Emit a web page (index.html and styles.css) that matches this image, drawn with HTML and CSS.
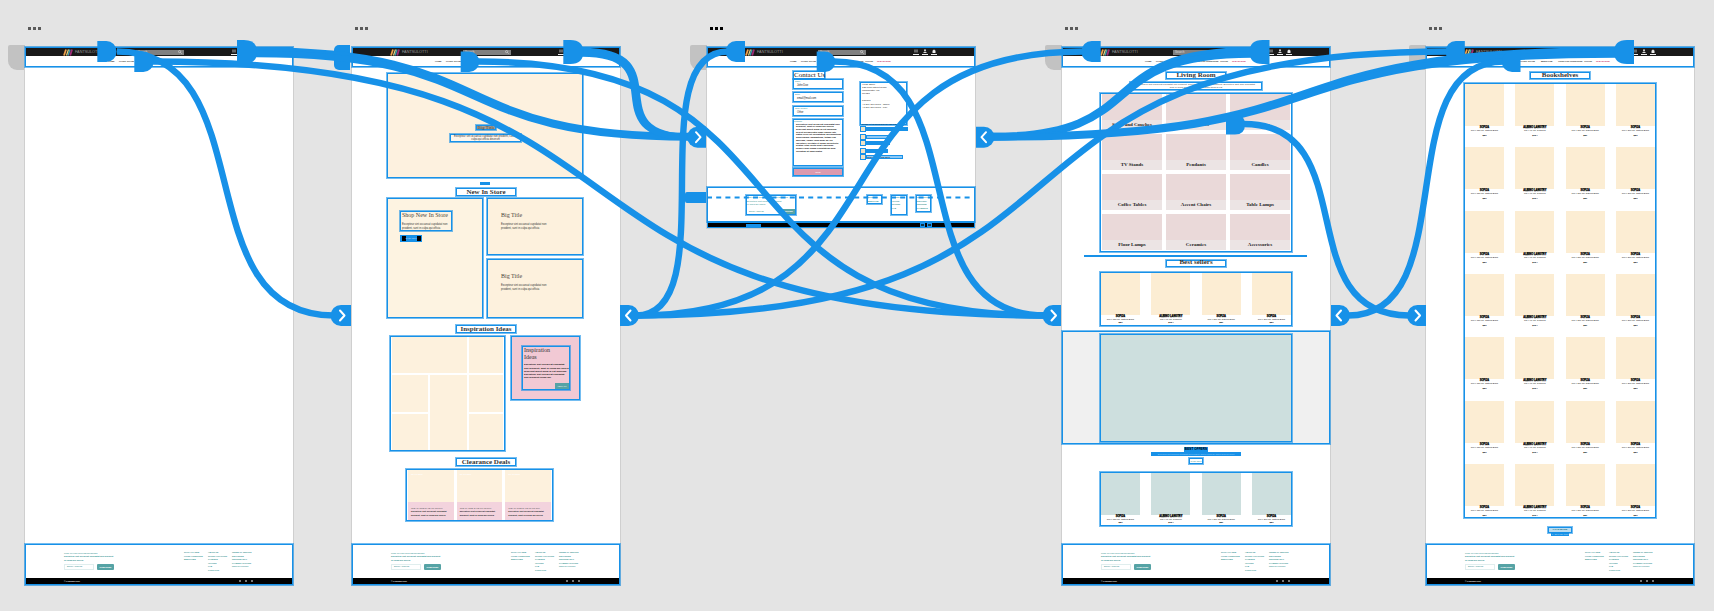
FILE: index.html
```html
<!DOCTYPE html>
<html lang="en">
<head>
<meta charset="utf-8">
<title>Prototype canvas</title>
<link rel="stylesheet" href="styles.css">
</head>
<body>
<main class="canvas">

  <section class="frame f1">
    <div class="dots"><i></i><i></i><i></i></div><div class="home-tab"></div>
    <div class="board"><header class="site-head"></header><footer class="site-foot"></footer></div>
  </section>

  <section class="frame f2">
    <div class="dots"><i></i><i></i><i></i></div><div class="home-tab linked"></div>
    <div class="board">
      <header class="site-head"></header>
      <div class="hero sel">
        <div class="hero-title sel">Big Title</div>
        <p class="hero-text sel">Excepteur sint occaecat cupidatat non proident, sunt in<br>culpa qui officia deserunt</p>
      </div>
      <div class="pill"></div>
      <h2 class="heading sel h-new">New In Store</h2>
      <div class="store">
        <div class="store-main sel">
          <div class="store-copy sel"><h3>Shop New In Store</h3><p>Excepteur sint occaecat cupidatat non<br>proident, sunt in culpa qui officia</p></div>
          <span class="store-btn">SHOP NOW</span>
        </div>
        <div class="store-side">
          <div class="tile sel"><h3>Big Title</h3><p>Excepteur sint occaecat cupidatat non<br>proident, sunt in culpa qui officia</p></div>
          <div class="tile sel"><h3>Big Title</h3><p>Excepteur sint occaecat cupidatat non<br>proident, sunt in culpa qui officia</p></div>
        </div>
      </div>
      <h2 class="heading sel h-insp">Inspiration Ideas</h2>
      <div class="insp">
        <div class="mosaic sel"><i class="wide"></i><i></i><i></i><i class="tall"></i><i></i><i></i><i></i></div>
        <div class="promo sel"><div class="promo-in sel"><h3>Inspiration<br>Ideas</h3><p>Excepteur sint occaecat cupidatat non proident, sunt in culpa qui officia deserunt mollit anim id est laborum. Excepteur sint occaecat cupidatat non proident culpa qui</p><span class="promo-btn">VIEW ALL</span></div></div>
      </div>
      <h2 class="heading sel h-deals">Clearance Deals</h2>
      <div class="deals sel">
        <article><b>UP TO 50%</b><div><h4>CLEARANCE SALE UP TO 50%</h4><p>Excepteur sint occaecat cupidatat<br>proident, sunt in culpa qui officia</p></div></article>
        <article><b>UP TO 50%</b><div><h4>CLEARANCE SALE UP TO 50%</h4><p>Excepteur sint occaecat cupidatat<br>proident, sunt in culpa qui officia</p></div></article>
        <article><b>UP TO 50%</b><div><h4>CLEARANCE SALE UP TO 50%</h4><p>Excepteur sint occaecat cupidatat<br>proident, sunt in culpa qui officia</p></div></article>
      </div>
      <footer class="site-foot"></footer>
    </div>
  </section>

  <section class="frame f3 active">
    <div class="dots"><i></i><i></i><i></i></div><div class="home-tab"></div>
    <div class="board">
      <header class="site-head"></header>
      <div class="contact">
        <form class="form">
          <h2 class="sel">Contact Us</h2>
          <div class="field sel"><label>Name</label><span>John Doe</span></div>
          <div class="field sel f-gap"><label>Email</label><span>email@mail.com</span></div>
          <div class="field sel f-gap"><label>Order number</label><span>Other</span></div>
          <div class="area sel"><label>Message</label><p>Excepteur sint occaecat cupidatat non proident, sunt in culpa qui officia deserunt mollit anim id est laborum. Sed ut perspiciatis unde omnis iste natus error sit voluptatem accusantium doloremque laudantium, totam rem aperiam, eaque ipsa quae ab illo inventore veritatis et quasi architecto beatae vitae dicta sunt explicabo. Nemo enim ipsam voluptatem quia voluptas sit aspernatur</p></div>
          <span class="send">SEND</span>
        </form>
        <div class="info">
          <div class="address sel"><p>Head Office</p><p>123 Main Street Road</p><p class="pa">Manchester, TS<br>UK123</p><p class="ph">Phones</p><p>+1 234 567 8901 - Office<br>+1 234 567 8901 - Fax</p><p class="hint">Please let us know how we can reach you</p></div>
          <div class="checks one"><div><i></i><em class="w45 solid"></em></div></div>
          <div class="checks"><div><i></i><em class="w22"></em></div><div><i></i><em class="w24 solid"></em></div></div>
          <div class="checks"><div><i></i><em class="w22 solid"></em></div><div><i></i><em class="w37">Send me news and offers</em></div></div>
        </div>
      </div>
      <div class="c-foot sel">
        <div class="c-news sel"><p>Sign up for our newsletter and get offers<br>Excepteur sint occaecat cupidatat<br>in culpa qui officia</p><div><span>Email Address</span><b>SUBSCRIBE</b></div></div>
        <div class="c-col c1 sel">SHOP ALL<br>BEDROOM</div>
        <div class="c-col c2 sel">ABOUT US<br>OFFICE<br>STORES<br>FAQ</div>
        <div class="c-col c3 sel">CONTACT US<br>DELIVERY<br>RETURNS<br>PAYMENTS</div>
      </div>
      <div class="c-bar"><span></span><i></i><i></i></div>
    </div>
  </section>

  <section class="frame f4">
    <div class="dots"><i></i><i></i><i></i></div><div class="home-tab"></div>
    <div class="board">
      <header class="site-head"></header>
      <h2 class="heading sel h-living">Living Room</h2>
      <p class="lead sel">Excepteur sint occaecat cupidatat non proident, sunt in culpa qui officia deserunt. Excepteur Sint Non Cupidatat<br>sunt in culpa qui officia deserunt mollit anim id est</p>
      <div class="cats sel">
        <div>Sofas and Couches</div><div>Bookshelves</div><div>Cushions</div>
        <div>TV Stands</div><div>Pendants</div><div>Candles</div>
        <div>Coffee Tables</div><div>Accent Chairs</div><div>Table Lamps</div>
        <div>Floor Lamps</div><div>Ceramics</div><div>Accessories</div>
      </div>
      <div class="rule"></div>
      <h2 class="heading sel h-best">Best sellers</h2>
      <div class="products sel short p1" data-rows="1"></div>
      <div class="banner sel"><div class="sel"></div></div>
      <div class="b-title">BEST OFFERS</div>
      <div class="b-line">Excepteur sint occaecat cupidatat non proident, sunt in culpa qui officia deserunt mollit</div>
      <div class="b-btn sel">SHOP NOW</div>
      <div class="products sel short teal p2" data-rows="1"></div>
      <footer class="site-foot"></footer>
    </div>
  </section>

  <section class="frame f5">
    <div class="dots"><i></i><i></i><i></i></div><div class="home-tab"></div>
    <div class="board">
      <header class="site-head"></header>
      <h2 class="heading sel h-living">Bookshelves</h2>
      <div class="products sel p3" data-rows="7"></div>
      <div class="more sel">LOAD MORE</div>
      <div class="more-sub">1 - 28 of 120 items</div>
      <footer class="site-foot"></footer>
    </div>
  </section>

  <svg class="wires" viewBox="0 0 1714 611" width="1714" height="611">
    <g class="wire">
      <path d="M117 51.5C267 51.5 182 315.5 334 315.5"/>
      <path d="M153 61.5C690 61.5 506 315.5 1045 315.5"/>
      <path d="M256 50.5C504 50.5 442 136 690 136"/>
      <path d="M256 54C504 54 442 137.500 690 137.500"/>
      <path d="M478 61.5C826 61.5 695 315.5 1045 315.5"/>
      <path d="M582 51C682 51 592 137 692 137"/>
      <path d="M582 53.500C679 53.500 590 137 690 137"/>
      <path d="M636 315.5C726 315.5 638 51.5 728 51.5"/>
      <path d="M636 315.5C921 315.5 799 51.5 1084 51.5"/>
      <path d="M636 315.5C1137 315.5 948 51.5 1449 51.5"/>
      <path d="M992 136C1155 136 1089 50.5 1252 50.5"/>
      <path d="M992 137.500C1155 137.500 1089 54.5 1252 54.5"/>
      <path d="M992 136C1366 136 1243 50.5 1617 50.5"/>
      <path d="M992 137.500C1366 137.500 1243 54.5 1617 54.5"/>
      <path d="M834 61.5C984 61.5 893 315.5 1045 315.5"/>
      <path d="M1244 124C1366 124 1287 315.5 1409 315.5"/>
      <path d="M1348 315.5C1466 315.5 1386 61.5 1504 61.5"/>
      <path class="dash" d="M707 197.5H972"/>
    </g>
    <g class="grip">
      <path d="M97.3 41h9a10.3 10.5 0 0 1 0 21h-9z"/>
      <path d="M134.3 51.5h9a10.3 10.2 0 0 1 0 20.4h-9z"/>
      <path d="M237 40h7q13 0 13 12t-13 12h-7z"/>
      <path d="M460.7 51.5h8.500a10 10.200 0 0 1 0 20.400h-8.500z"/>
      <path d="M563.3 40h7q13 0 13 12t-13 12h-7z"/>
      <path d="M745 41h-9a10.300 10.500 0 0 0 0 21h9z"/>
      <path d="M816.700 51.500h8.500a10 10.200 0 0 1 0 20.400h-8.500z"/>
      <path d="M1100.700 41h-9a10.300 10.500 0 0 0 0 21h9z"/>
      <path d="M1269.500 40h-7q-13 0-13 12t13 12h7z"/>
      <path d="M1226 114.500h9q10 0 10 10t-10 10h-9z"/>
      <path d="M1464.800 41h-9a10.300 10.500 0 0 0 0 21h9z"/>
      <path d="M1520.500 51.500h-8.500a10.200 10.200 0 0 0 0 20.400h8.500z"/>
      <path d="M1634 40h-7q-13 0-13 12t13 12h7z"/>
      <path d="M706 192h-19q-2 0-2 2v7q0 2 2 2h19z"/>
      <path d="M351 305h-10a10.400 10.500 0 0 0 0 21h10z"/>
      <path d="M620 305h8.500a10.400 10.500 0 0 1 0 21H620z"/>
      <path d="M706 126.700h-8.500a10.400 10.500 0 0 0 0 21h8.500z"/>
      <path d="M976 126.700h8a10.400 10.500 0 0 1 0 21h-8z"/>
      <path d="M1061 305h-8a10.400 10.500 0 0 0 0 21h8z"/>
      <path d="M1331 305h8.500a10.400 10.500 0 0 1 0 21h-8.500z"/>
      <path d="M1426 305h-8.500a10.400 10.500 0 0 0 0 21h8.500z"/>
    </g>
    <g class="chev">
      <path d="M340 310.500l4.500 5-4.500 5"/>
      <path d="M630.500 310.500l-4.500 5 4.500 5"/>
      <path d="M696 132.200l4.500 5-4.500 5"/>
      <path d="M986 132.200l-4.500 5 4.500 5"/>
      <path d="M1051.500 310.500l4.500 5-4.500 5"/>
      <path d="M1341 310.500l-4.500 5 4.500 5"/>
      <path d="M1415.500 310.500l4.500 5-4.500 5"/>
    </g>
  </svg>
</main>
<script src="app.js"></script>
</body>
</html>
```
FILE: styles.css
```css
* { box-sizing: border-box; }
body { margin: 0; font-family: "Liberation Sans", Arial, sans-serif; }
h2, h3, h4, p { margin: 0; }
i, em { font-style: normal; }
.canvas { position: relative; width: 1714px; height: 611px; background: #e4e4e4; overflow: hidden; }

/* frames on the free canvas */
.frame { position: absolute; top: 27px; width: 268px; }
.f1 { left: 25px; }
.f2 { left: 352px; }
.f3 { left: 707px; }
.f4 { left: 1062px; }
.f5 { left: 1426px; }
.dots { display: flex; gap: 2px; height: 20px; padding: 0 0 0 3px; }
.dots i { width: 3px; height: 3px; background: #5a5a5a; }
.active .dots i { background: #000; }
.home-tab { position: absolute; left: -17px; top: 18px; width: 17px; height: 25px; background: #c2c2c2; border-radius: 2px 0 0 9px; }
.home-tab.linked { left: -18px; background: #1791e8; border-radius: 5px 0 0 5px; width: 16px; }
.board { position: relative; display: flex; flex-direction: column; height: 538px; background: #fff; box-shadow: 0 0 0 1px #cfcfcf; }
.f3 .board { height: 181px; }
.sel { border: 1px solid #1791e8; box-shadow: 0 0 0 1px rgba(23, 145, 232, .6); }

/* site header */
.site-head { flex: none; height: 20px; border: 1px solid #1791e8; box-shadow: 0 0 0 1px rgba(23, 145, 232, .6); }
.bar { display: flex; align-items: center; height: 8px; background: #191919; }
.bar svg { display: block; }
.brand { display: flex; align-items: center; gap: 2px; width: 110px; padding-left: 37px; font-size: 3.800px; line-height: 5px; color: #999; }
.search { display: flex; align-items: center; justify-content: space-between; width: 48px; height: 5px; padding: 0 2px; background: #808080; color: #ddd; font-size: 3px; line-height: 5px; }
.tools { display: flex; gap: 3px; margin-left: 47px; }
.tools i { width: 6px; height: 6px; border-bottom: 1px solid #eee; }
.nav { display: flex; height: 10px; align-items: center; padding-left: 82px; font-size: 2.200px; line-height: 3px; font-weight: 700; color: #333; white-space: nowrap; }
.nav span { flex: none; }
.n1 { width: 11px; } .n2 { width: 21px; } .n3 { width: 17px; } .n4 { width: 26px; } .n5 { width: 12px; }
.n6 { color: #c2185b; }

/* site footer */
.site-foot { margin-top: auto; height: 41px; border: 1px solid #1791e8; box-shadow: 0 0 0 1px rgba(23, 145, 232, .6); font-size: 2.4px; color: #2f8f8f; }
.foot-top { display: flex; height: 33px; padding: 6px 0 0 38px; }
.news { width: 120px; line-height: 3.6px; }
.news h4 { font-size: 2.1px; line-height: 4px; font-weight: 400; }
.news p { font-size: 2.2px; font-weight: 700; }
.news div { display: flex; gap: 3px; margin-top: 2px; line-height: 6px; }
.news span { width: 30px; height: 6px; padding-left: 3px; box-shadow: inset 0 0 0 1px #e0eeee; }
.news b { width: 17px; height: 6px; background: #56a3a5; color: #fff; text-align: center; font-size: 2px; border-radius: 1px; }
.links { width: 24px; line-height: 3.6px; font-size: 2px; font-weight: 700; white-space: nowrap; }
.foot-bar { display: flex; height: 6px; padding: 0 39px 0 38px; align-items: center; justify-content: space-between; background: #000; color: #fff; font-size: 2px; line-height: 4px; font-weight: 700; }
.foot-bar span:last-child { display: flex; gap: 4px; }
.foot-bar i { width: 2px; height: 2px; background: #777; }

/* headings */
.heading { flex: none; align-self: center; width: 60px; height: 8px; font: 700 7px/6px "Liberation Serif", serif; color: #333; text-align: center; white-space: nowrap; }
.h-new { margin-top: 3px; }
.h-insp { margin-top: 7px; }
.h-deals { margin-top: 7px; }
.h-living { margin-top: 5px; height: 7px; line-height: 5px; }
.h-best { margin-top: 3px; height: 7px; line-height: 3px; }

/* home board */
.hero { flex: none; width: 196px; height: 105px; margin: 6px 0 0 35px; padding-top: 51px; background: #fdf1df; }
.hero-title { width: 20px; height: 5px; margin: 0 0 0 88px; background: #aaa193; color: #444; font: 5px/3px "Liberation Serif", serif; text-align: center; }
.hero-text { width: 71px; height: 8px; margin: 4px 0 0 62px; font-size: 2.6px; line-height: 3.2px; text-align: center; color: #333; background: #fdf6ec; white-space: nowrap; }
.pill { flex: none; width: 10px; height: 3px; margin: 4px 0 0 128px; background: #1791e8; }
.store { display: flex; gap: 4px; margin: 2px 0 0 35px; height: 120px; }
.store-main { width: 96px; padding: 12px 0 0 12px; background: #fdf3e1; }
.store-copy { width: 52px; height: 20px; padding-left: 1px; }
.store h3 { font: 6px/7px "Liberation Serif", serif; color: #4a443c; white-space: nowrap; }
.store p { margin-top: 4px; font-size: 2.7px; line-height: 3.7px; color: #333; white-space: nowrap; }
.store-btn { display: block; width: 22px; height: 7px; margin-top: 4px; border: 1px solid #1791e8; background: linear-gradient(90deg, #1791e8 1px, #000 1px 5px, #1791e8 5px 16px, #000 16px); color: #cde; font-size: 2px; line-height: 5px; text-align: center; }
.store-side { display: flex; flex-direction: column; gap: 4px; width: 96px; }
.tile { height: 57px; padding: 13px 0 0 13px; background: #fdf1dd; }
.tile + .tile { height: 59px; }
.insp { display: flex; gap: 6px; align-items: flex-start; margin: 3px 0 0 38px; }
.mosaic { display: grid; width: 115px; height: 115px; padding: 0 1px; gap: 2px; grid-template-columns: 36px 37px 34px; grid-template-rows: 36px 37px 36px; }
.mosaic { justify-content: space-between; }
.mosaic i { background: #fdf1dd; }
.mosaic .wide { grid-column: 1 / 3; }
.mosaic .tall { grid-row: 2 / 4; grid-column: 2; }
.promo { width: 69px; height: 64px; padding: 9px 0 0 10px; background: #f1c9d4; }
.promo-in { width: 48px; height: 44px; padding-left: 1px; display: flex; flex-direction: column; }
.promo h3 { font: 6px/7.2px "Liberation Serif", serif; color: #333; }
.promo p { margin-top: 2px; font-size: 2.5px; line-height: 3.2px; color: #111; height: 19.500px; font-weight: 700; }
.promo-btn { align-self: flex-end; width: 14px; height: 6px; background: #56a3a5; color: #fff; font-size: 2px; line-height: 6px; text-align: center; }
.deals { display: grid; grid-template-columns: repeat(3, minmax(0, 1fr)); gap: 3px; width: 147px; height: 52px; margin: 3px 0 0 54px; padding: 0 1px; }
.deals article { display: flex; flex-direction: column; background: #fdf1dd; }
.deals b { height: 32px; padding: 3px 0 0 3px; font-size: 2.2px; line-height: 3px; color: #fff; }
.deals div { flex: 1; padding: 4px 0 0 3px; background: #f3d3dd; white-space: nowrap; }
.deals h4 { font-size: 2.2px; line-height: 4px; font-weight: 400; color: #555; }
.deals p { font-size: 2.2px; line-height: 3.8px; font-weight: 700; color: #222; }

/* contact board */
.contact { display: flex; gap: 17px; height: 117px; padding: 4px 0 0 86px; }
.form { width: 50px; }
.form h2 { width: 32px; height: 8px; font: 7px/7px "Liberation Serif", serif; white-space: nowrap; color: #222; }
.field { height: 10px; font-size: 2.6px; line-height: 3px; color: #222; display: flex; flex-direction: column; justify-content: space-between; padding: 0 0 1px 3px; }
.form label { font-size: 2px; line-height: 2px; color: #2f8f8f; display: block; margin-left: -2px; }
.f-gap { margin-top: 3.3px; }
.area { height: 47px; margin-top: 3px; padding: 0 1px 0 2px; }
.area p { margin-top: 2px; font-size: 2.4px; line-height: 2.7px; color: #111; font-weight: 700; }
.send { display: block; height: 8px; margin-top: 2px; border: 1px solid #1791e8; background: #dc9aae; color: #fff; font-size: 2px; line-height: 6px; text-align: center; box-shadow: 0 0 0 1px rgba(23, 145, 232, .7); }
.info { width: 52px; padding-top: 11px; }
.address { width: 47px; height: 43px; font-size: 2.500px; line-height: 3.4px; color: #222; white-space: nowrap; padding-left: 1px; }
.pa { line-height: 2.8px; } .ph { margin-top: 4px; } .address .hint { margin-top: 13px; font-size: 2.200px; }
.checks { margin-top: 2px; }
.checks.one { margin-top: 1px; }
.checks div { display: flex; align-items: center; height: 6px; }
.checks i { width: 6px; height: 6px; background: #efe3c6; border: 1.500px solid #1791e8; }
.checks em { height: 4px; border: 1px solid #1791e8; font-size: 2px; line-height: 3px; white-space: nowrap; background: #8cc8f5; }
.checks em.solid { background: #1791e8; }
.w45 { width: 42px; } .w22 { width: 22px; } .w24 { width: 24px; } .w37 { width: 37px; }
.c-foot { display: flex; height: 35px; margin-top: 3px; padding: 7px 0 0 38px; font-size: 2.300px; line-height: 3.500px; color: #2f8f8f; white-space: nowrap; align-items: flex-start; }
.c-news { width: 50px; height: 20px; display: flex; flex-direction: column; justify-content: space-between; }
.c-news div { display: flex; justify-content: space-between; line-height: 5px; padding-left: 2px; }
.c-news b { width: 14px; background: #56a3a5; color: #fff; font-size: 2px; }
.c-col { width: 16px; height: 20px; font-weight: 700; font-size: 2px; }
.c1 { margin-left: 71px; height: 9px; width: 15px; } .c2 { margin-left: 9px; } .c3 { margin-left: 9px; height: 17px; width: 15px; }
.c-bar { display: flex; align-items: center; height: 6px; border: 1px solid #1791e8; padding-left: 38px; background: #000; }
.c-bar span { width: 15px; height: 3px; background: #1791e8; margin-right: 159px; }
.c-bar i { width: 5px; height: 4px; margin-right: 2px; border: 1px solid #1791e8; background: #134; }

/* category board */
.lead { width: 132px; height: 8px; margin: 3px 0 0 68px; font-size: 2.400px; line-height: 3.300px; text-align: center; color: #444; white-space: nowrap; }
.cats { flex: none; display: grid; grid-template-columns: repeat(3, 60px); grid-template-rows: repeat(4, 36px); gap: 4px; justify-content: space-between; width: 192px; height: 159px; margin: 3px 0 0 38px; padding: 0 1px; }
.cats div { display: flex; align-items: flex-end; justify-content: center; background: linear-gradient(0deg, #ece4e4 10.500px, #ead9d9 10.500px); font: 700 5px/10px "Liberation Serif", serif; color: #222; white-space: nowrap; }
.rule { flex: none; width: 223px; height: 2px; margin: 3px 0 0 22px; background: #1791e8; }
.products { flex: none; display: grid; grid-template-columns: repeat(4, 39px); grid-auto-rows: 63.350px; justify-content: space-between; width: 192px; margin-left: 38px; overflow: hidden; }
.p3 { height: 435px; margin-top: 4px; }
.p1 { height: 54px; margin-top: 5px; }
.p2 { height: 54px; margin-top: 8px; }
.product { display: flex; flex-direction: column; align-items: center; white-space: nowrap; color: #111; }
.thumb { width: 39px; height: 42px; background: #fcedd3; }
.teal .thumb { background: #cddfde; }
.product b { font-size: 2.600px; line-height: 3px; color: #000; -webkit-text-stroke: .25px #000; }
.product p { font-size: 2.200px; line-height: 3px; }
.product small { margin-top: 2px; font-size: 2.400px; line-height: 4px; font-weight: 700; }
.short .product small { margin-top: 0; }
.banner { flex: none; height: 113px; margin-top: 5px; padding: 2px 37px 0; background: #f0f0f0; }
.banner div { height: 108px; background: #cddfde; }
.b-title { width: 24px; height: 5px; margin: 3px 0 0 122px; background: #1791e8; color: #000; font-size: 3.200px; line-height: 5px; font-weight: 700; text-align: center; white-space: nowrap; }
.b-line { width: 90px; height: 4px; margin-left: 89px; background: #1791e8; color: #9cd0f7; font-size: 2px; line-height: 4px; text-align: center; white-space: nowrap; }
.b-btn { width: 14px; height: 6px; margin: 2px 0 0 127px; color: #2f8f8f; font-size: 2px; line-height: 4px; text-align: center; white-space: nowrap; }
.more { width: 24px; height: 6px; margin: 9px 0 0 122px; color: #176a6c; background: #bcdcf0; font-size: 2.400px; line-height: 4px; font-weight: 700; text-align: center; white-space: nowrap; }
.more-sub { width: 18px; height: 3px; margin: 0 0 0 125px; background: #1791e8; color: #bde; font-size: 2px; line-height: 3px; text-align: center; white-space: nowrap; }

/* prototype wires */
.wires { position: absolute; left: 0; top: 0; }
.wire { fill: none; stroke: #1791e8; stroke-width: 6.400px; }
.wire .dash { stroke-width: 2px; stroke-dasharray: 5 4.200; }
.grip { fill: #1791e8; }
.chev { fill: none; stroke: #fff; stroke-width: 2px; stroke-linecap: round; stroke-linejoin: round; }
```
FILE: app.js
```js
const head = `
  <div class="bar">
    <div class="brand"><svg width="10" height="7" viewBox="0 0 10 7"><path d="M1 6.500L3 .5" stroke="#f0a04b" stroke-width="1.800"/><path d="M3.500 6.500L5.500 .5" stroke="#e9d27a" stroke-width="1.300"/><path d="M5 6.500L7 .5" stroke="#3f9aa8" stroke-width="1.500"/><path d="M7.200 6.500L9 .5" stroke="#a02c78" stroke-width="1.800"/></svg>FANTSULOTTI</div>
    <div class="search"><span>Search</span><svg width="4" height="4" viewBox="0 0 4 4"><circle cx="1.600" cy="1.600" r="1.100" fill="none" stroke="#ddd" stroke-width=".6"/><path d="M2.400 2.400L3.700 3.700" stroke="#ddd" stroke-width=".6"/></svg></div>
    <div class="tools">
      <i><svg width="6" height="4" viewBox="0 0 6 4"><rect x="1" y=".5" width="4" height="3" fill="#666"/></svg></i>
      <i><svg width="6" height="4" viewBox="0 0 6 4"><circle cx="3" cy="1.200" r="1" fill="#ddd"/><path d="M1 4q2-3 4 0z" fill="#ddd"/></svg></i>
      <i><svg width="6" height="4" viewBox="0 0 6 4"><path d="M1.500 1.500h3V4h-3zM2 1.500q1-2 2 0z" fill="#eee"/></svg></i>
    </div>
  </div>
  <nav class="nav"><span class="n1">HOME</span><span class="n2">LIVING ROOM</span><span class="n3">BEDROOM</span><span class="n4">OUTDOOR FURNITURE</span><span class="n5">OFFICE</span><span class="n6">CLEARANCE</span></nav>`;

const foot = `
  <div class="foot-top">
    <div class="news"><h4>SIGN UP FOR OUR NEWSLETTER</h4><p>Excepteur sint occaecat cupidatat non proident<br>in culpa qui officia</p><div><span>Email Address</span><b>SUBSCRIBE</b></div></div>
    <div class="links">SHOP ALL NEW<br>LIVING FURNITURE<br>BEDROOMS</div>
    <div class="links">ABOUT US<br>STORE LOCATIONS<br>CAREERS<br>OFFICES<br>FAQ<br>CONTACTS</div>
    <div class="links">TERMS OF SERVICE<br>DELIVERIES<br>RETURNS INFO<br>PAYMENT OPTIONS<br>PRIVACY POLICY</div>
  </div>
  <div class="foot-bar"><span>© FANTSULOTTI</span><span><i></i><i></i><i></i></span></div>`;

const items = [
  ['SOFIJA', '100 x 120 cm, Natural Black', '$89'],
  ['ALBINO LANGTRY', '100 x 90 cm, Rosaries', '$124'],
  ['SOFIJA', '100 x 200 cm, Natural Black', '$89'],
  ['SOFIJA', '100 x 200 cm, Natural Black', '$89']
];
const card = ([name, text, price]) =>
  `<div class="product"><div class="thumb"></div><b>${name}</b><p>${text}</p><small>${price}</small></div>`;

document.querySelectorAll('.site-head').forEach(el => { el.innerHTML = head; });
document.querySelectorAll('.site-foot').forEach(el => { el.innerHTML = foot; });
document.querySelectorAll('.products').forEach(el => {
  el.innerHTML = items.map(card).join('').repeat(Number(el.dataset.rows));
});
```
